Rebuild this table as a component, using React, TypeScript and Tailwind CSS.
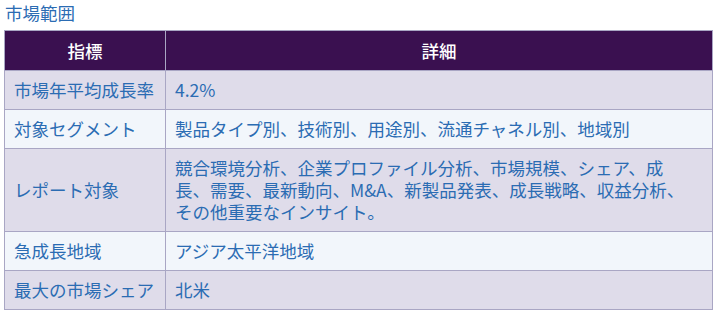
const rows: [string, string[]][] = [
  ["市場年平均成長率", ["4.2%"]],
  ["対象セグメント", ["製品タイプ別、技術別、用途別、流通チャネル別、地域別"]],
  [
    "レポート対象",
    [
      "競合環境分析、企業プロファイル分析、市場規模、シェア、成",
      "長、需要、最新動向、M&A、新製品発表、成長戦略、収益分析、",
      "その他重要なインサイト。",
    ],
  ],
  ["急成長地域", ["アジア太平洋地域"]],
  ["最大の市場シェア", ["北米"]],
]

export default function App() {
  return (
    <div className="w-[718px] h-[319px] bg-white px-1 pt-[2px] font-['Noto_Sans_CJK_JP','Noto_Sans',sans-serif]">
      <h3 className="pl-[1px] text-[17.5px] leading-[22px] text-[#2b6cb3] mb-[6px]">市場範囲</h3>
      <table className="w-[709px] border-collapse border border-[#a9a6c4] text-[17.5px] leading-[22px]">
        <thead>
          <tr className="bg-[#3a1050] text-white">
            <th className="w-[161px] h-[40px] border border-[#a9a6c4] font-medium">指標</th>
            <th className="h-[40px] border border-[#a9a6c4] font-medium">詳細</th>
          </tr>
        </thead>
        <tbody>
          {rows.map(([k, lines], i) => (
            <tr key={k} className={i % 2 === 0 ? "bg-[#dfdcea]" : "bg-[#f2f6fb]"}>
              <td className="border border-[#a9a6c4] pl-[9px] pr-1 py-2 text-[#2b6cb3] whitespace-nowrap">{k}</td>
              <td className="border border-[#a9a6c4] pl-[9px] pr-[10px] py-2 text-[#2b6cb3]">
                {lines.map((l) => (
                  <div key={l} className="whitespace-nowrap">{l}</div>
                ))}
              </td>
            </tr>
          ))}
        </tbody>
      </table>
    </div>
  )
}
